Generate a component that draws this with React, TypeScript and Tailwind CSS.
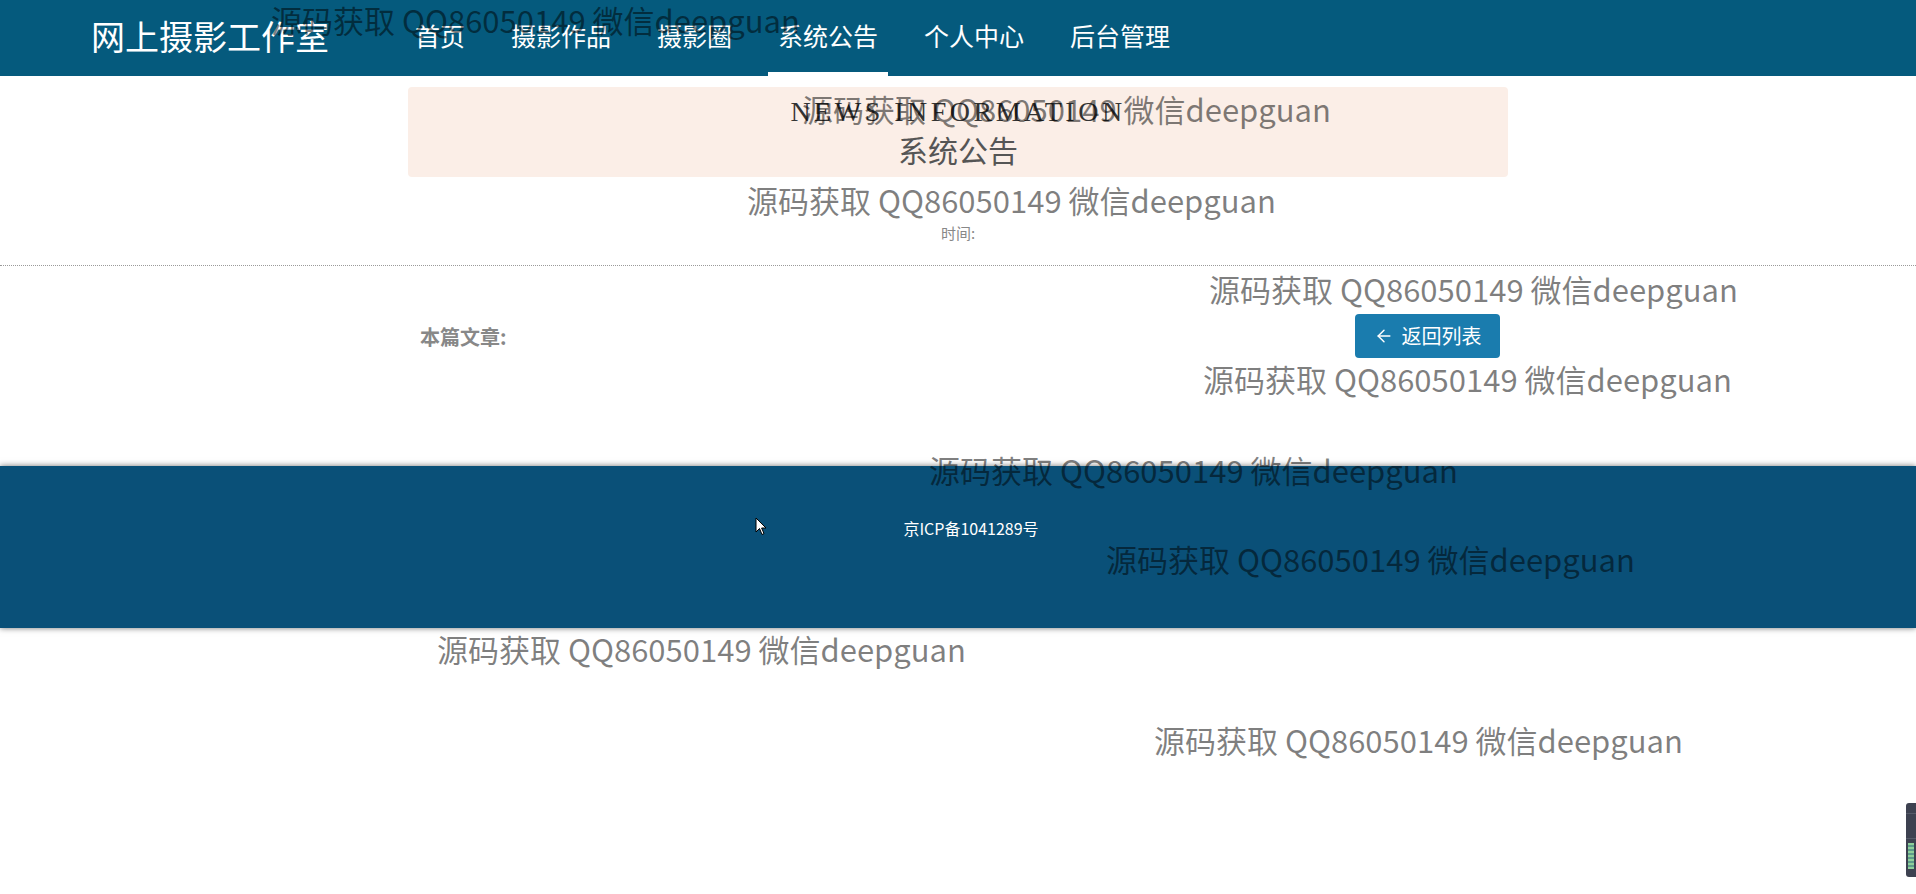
import React from 'react';
import { ArrowLeft } from 'lucide-react';

const navItems = ['首页', '摄影作品', '摄影圈', '系统公告', '个人中心', '后台管理'];

function Watermark({ className }: { className: string }) {
  return (
    <div
      className={`pointer-events-none absolute z-20 whitespace-nowrap text-[31px] leading-[40px] text-black/50 ${className}`}
    >
      源码获取 QQ86050149 微信deepguan
    </div>
  );
}

export default function App() {
  return (
    <div className="relative min-h-[894px] overflow-hidden bg-white font-['Noto_Sans_CJK_SC','Noto_Sans',sans-serif]">
      {/* header */}
      <header className="flex h-[76px] items-center bg-[#055a7d] pb-[4px]">
        <div className="pl-[91px] text-[34px] leading-none text-white">网上摄影工作室</div>
        <nav className="ml-[76px] flex h-full gap-[26px]">
          {navItems.map((item) => (
            <a
              key={item}
              className="relative flex h-full items-center px-[10px] text-[25px] text-white"
            >
              {item}
              {item === '系统公告' && (
                <span className="absolute bottom-[-4px] left-0 right-0 h-[4px] bg-white" />
              )}
            </a>
          ))}
        </nav>
      </header>

      {/* page head */}
      <div className="mx-auto w-[1100px] pt-[11px]">
        <div className="flex h-[90px] flex-col items-center rounded-[4px] bg-[#fbeee7] pt-[9px]">
          <div className="h-[32px] font-['Liberation_Serif',serif] text-[28px] leading-[32px] tracking-[3.5px] text-[#333]">
            NEWS INFORMATION
          </div>
          <div className="mt-[3px] text-[30px] leading-[36px] text-[#555]">系统公告</div>
        </div>
        <h2 className="h-[47px]" />
        <div className="text-center text-[15px] leading-[18px] text-[#888]">时间:</div>
      </div>

      <div className="mt-[23px] border-t border-dotted border-[#9a9a9a]" />

      <div className="mx-auto mt-[48px] flex w-[1100px] items-center justify-between pl-[12px] pr-[8px]">
        <div className="pt-[2px] text-[20px] font-bold text-[#888]">本篇文章:</div>
        <button className="flex h-[44px] w-[145px] items-center justify-center gap-[8px] rounded-[4px] bg-[#1a7cae] text-[20px] text-white">
          <ArrowLeft size={20} strokeWidth={1.75} />
          返回列表
        </button>
      </div>

      {/* footer */}
      <footer className="mt-[108px] h-[162px] bg-[#0a5078] pl-[26px] pt-[52px] text-center text-[16px] leading-[20px] text-white shadow-[0_0_6px_rgba(0,0,0,0.55)]">
        京ICP备1041289号
      </footer>

      {/* watermarks */}
      <Watermark className="left-[271px] top-[0px]" />
      <Watermark className="left-[802px] top-[89px]" />
      <Watermark className="left-[747px] top-[180px]" />
      <Watermark className="left-[1209px] top-[269px]" />
      <Watermark className="left-[1203px] top-[359px]" />
      <Watermark className="left-[929px] top-[450px]" />
      <Watermark className="left-[1106px] top-[539px]" />
      <Watermark className="left-[437px] top-[629px]" />
      <Watermark className="left-[1154px] top-[720px]" />

      {/* mouse pointer */}
      <svg className="absolute left-[755px] top-[517px] z-30" width="12" height="19" viewBox="0 0 12 19">
        <path d="M1 1 L1 15 L4.5 11.5 L7 17.5 L9 16.6 L6.6 11 L11 11 Z" fill="#fff" stroke="#000" strokeWidth="1" />
      </svg>

      {/* side widget */}
      <div className="absolute left-[1906px] top-[803px] flex h-[74px] w-[10px] flex-col overflow-hidden rounded-l-[3px] bg-[#3d4150]">
        <div className="mt-[10px] h-[26px] border-y border-[#555a68]" />
        <div className="mx-[2px] mt-[4px] h-[26px] bg-[repeating-linear-gradient(180deg,#8fcf9a_0px,#8fcf9a_2px,#5e9c8a_2px,#5e9c8a_4px)]" />
      </div>
    </div>
  );
}
